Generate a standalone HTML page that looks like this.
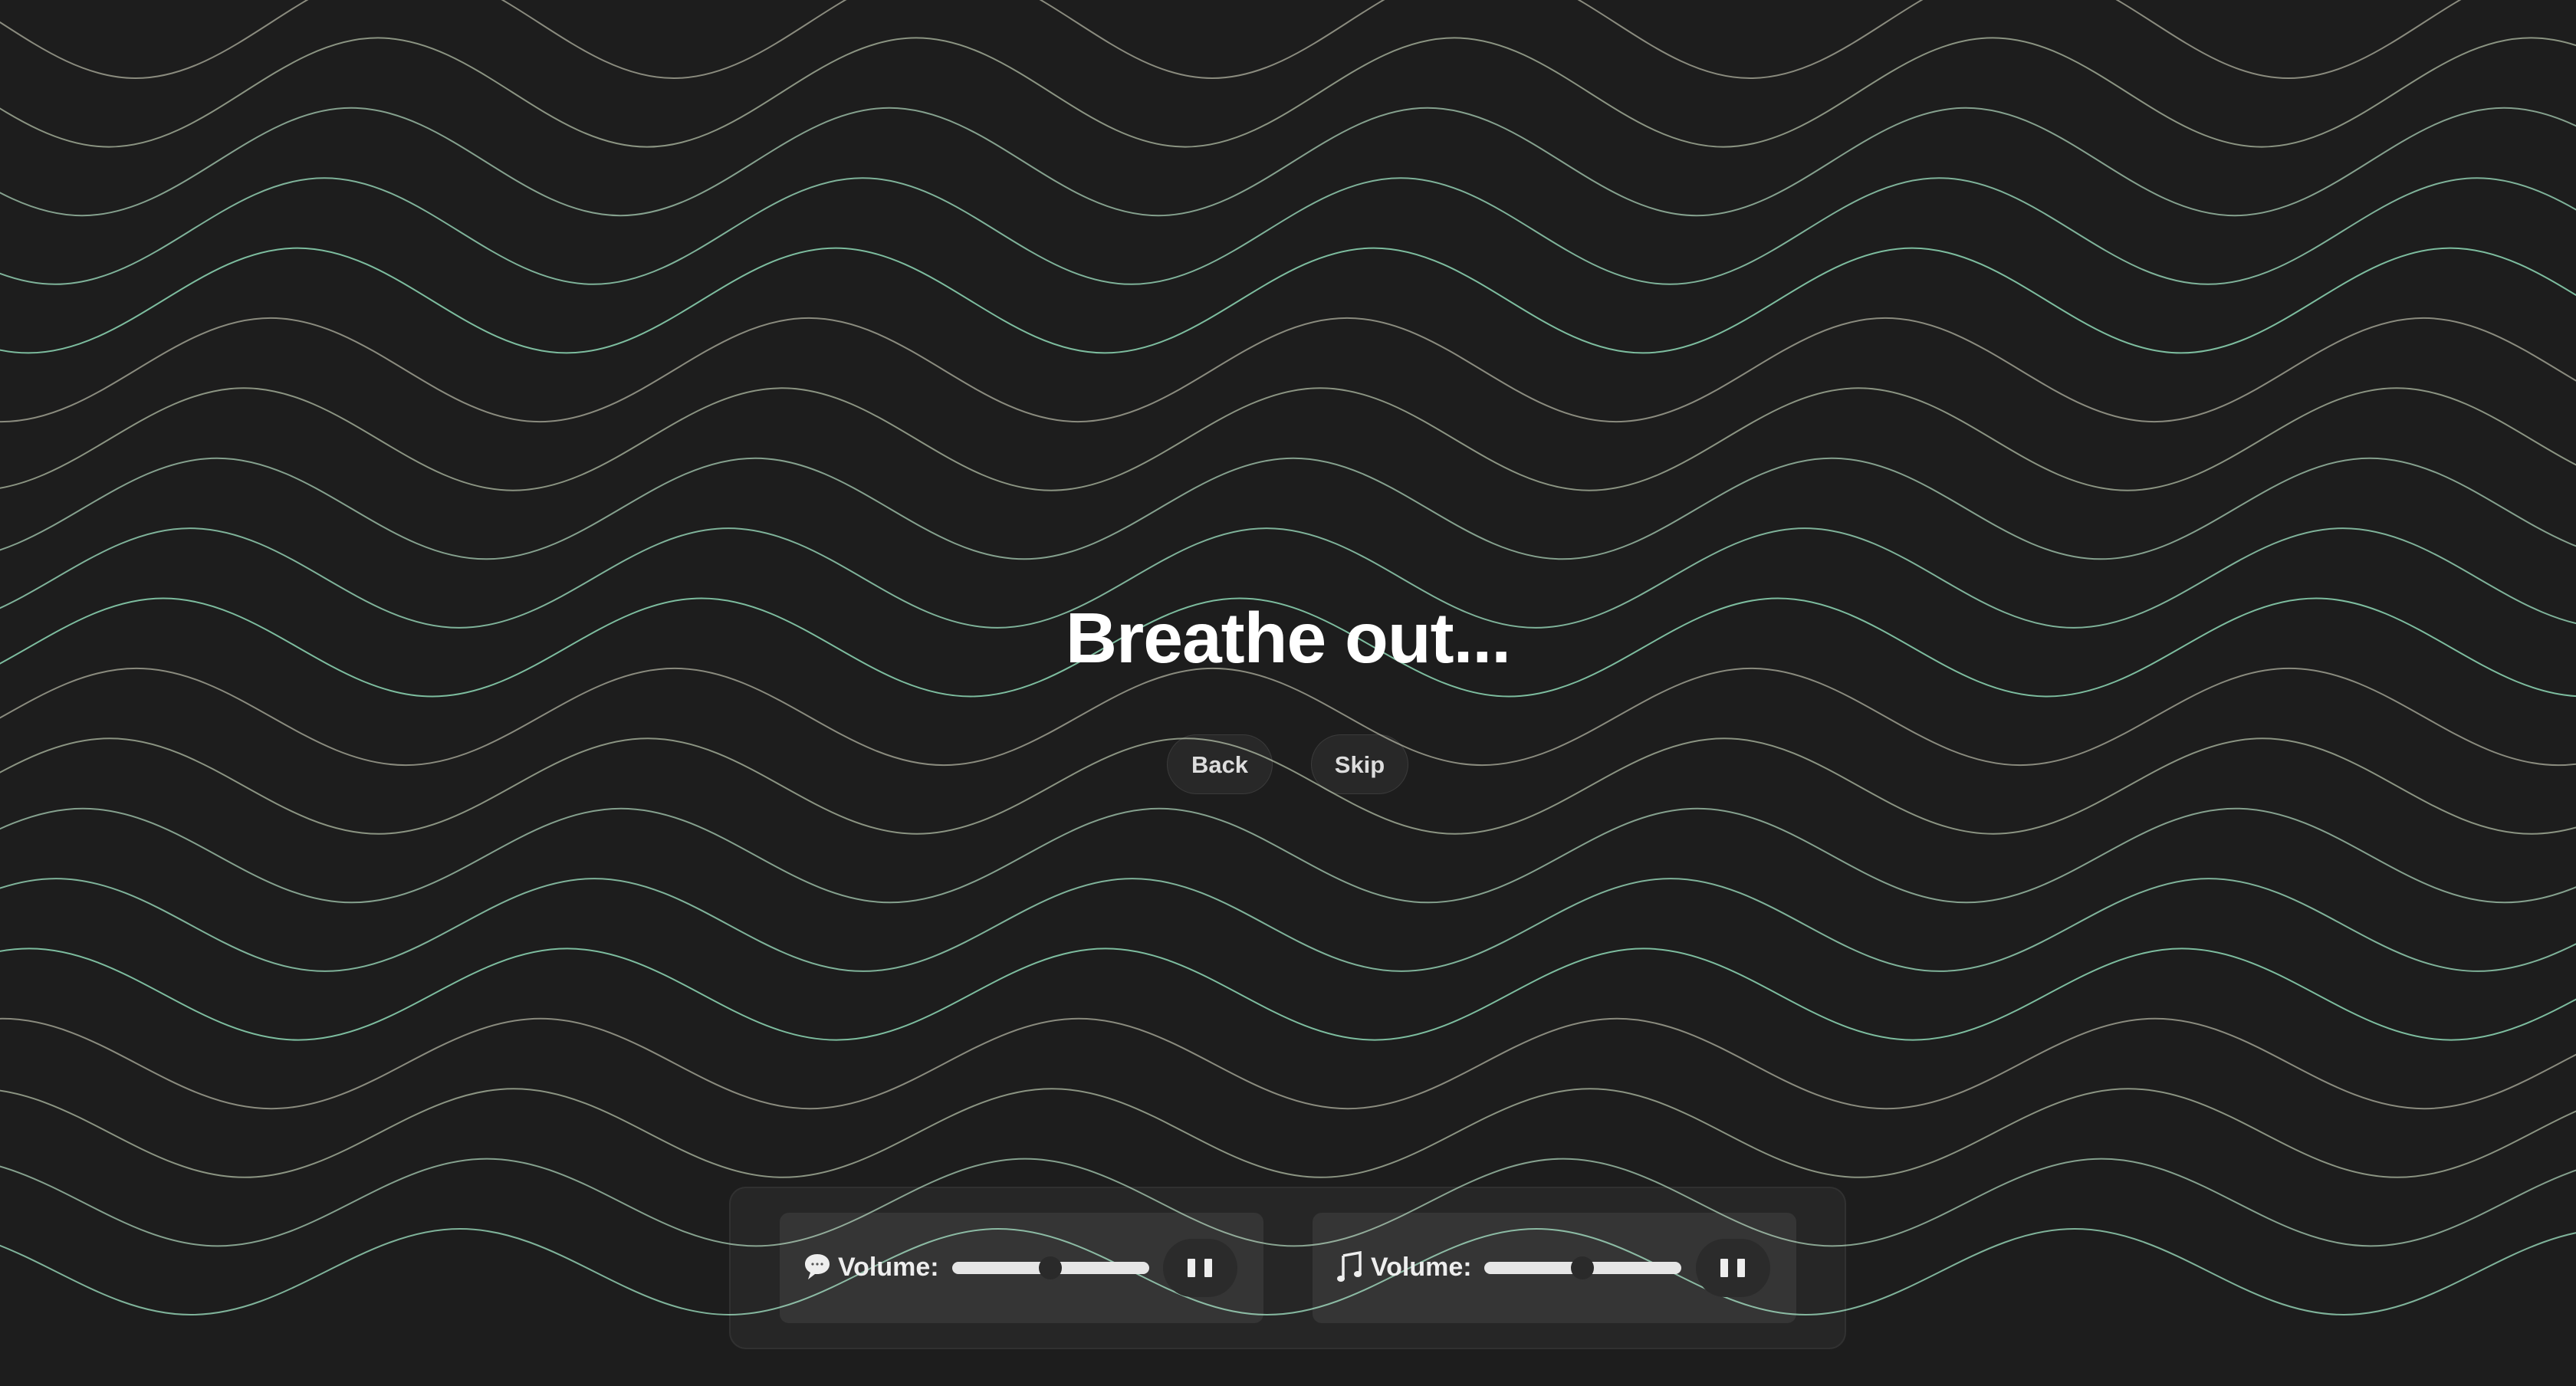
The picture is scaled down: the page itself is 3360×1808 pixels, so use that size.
<!DOCTYPE html>
<html><head><meta charset="utf-8"><style>
html,body{margin:0;padding:0;width:3360px;height:1808px;overflow:hidden;background:#1d1d1d;font-family:"Liberation Sans",sans-serif;}
svg.bg{position:absolute;left:0;top:0}
.title{position:absolute;left:0;width:3360px;top:777px;text-align:center;color:#fff;font-weight:bold;font-size:93px;line-height:110px;letter-spacing:-1px}
.btn{position:absolute;top:958px;height:78px;border-radius:40px;background:rgba(255,255,255,0.05);border:1px solid rgba(255,255,255,0.09);color:#ddd;font-weight:bold;font-size:31px;line-height:78px;text-align:center;box-sizing:border-box}
.panel{position:absolute;left:951px;top:1548px;width:1457px;height:212px;border-radius:22px;background:rgba(255,255,255,0.045);border:2px solid rgba(255,255,255,0.05);box-sizing:border-box}
.card{position:absolute;top:1582px;width:631px;height:144px;border-radius:12px;background:rgba(255,255,255,0.07)}
.vol{position:absolute;top:1632px;color:#eee;font-weight:bold;font-size:34px;line-height:42px}
.track{position:absolute;top:1646px;width:257px;height:16px;border-radius:8px;background:#e6e6e6}
.thumb{position:absolute;top:1639px;width:30px;height:30px;border-radius:50%;background:#2a2a2a}
.pause{position:absolute;top:1616px;width:97px;height:76px;border-radius:38px;background:#2b2b2b}
.pause:before,.pause:after{content:"";position:absolute;top:26px;width:10px;height:24px;background:#eee;border-radius:1px}
.pause:before{left:32px}.pause:after{left:54px}
</style></head><body>
<svg class="bg" width="3360" height="1808" viewBox="0 0 3360 1808">
<defs><path id="w" fill="none" stroke-width="2" vector-effect="non-scaling-stroke" d="M0,-1 c127.8,0 223.2,2 351,2 s223.2,-2 351,-2 s223.2,2 351,2 s223.2,-2 351,-2 s223.2,2 351,2 s223.2,-2 351,-2 s223.2,2 351,2 s223.2,-2 351,-2 s223.2,2 351,2 s223.2,-2 351,-2 s223.2,2 351,2 s223.2,-2 351,-2 s223.2,2 351,2 s223.2,-2 351,-2"/></defs>
<use href="#w" stroke="#8a8b7e" transform="translate(-876,30) scale(1,72)"/>
<use href="#w" stroke="#8b9482" transform="translate(-911,120.5) scale(1,71.1)"/>
<use href="#w" stroke="#85a18e" transform="translate(-946,211) scale(1,70.2)"/>
<use href="#w" stroke="#7fb39a" transform="translate(-981,301.5) scale(1,69.3)"/>
<use href="#w" stroke="#7dbd9f" transform="translate(-1016,392) scale(1,68.4)"/>
<use href="#w" stroke="#8a8b7e" transform="translate(-1051,482.5) scale(1,67.6)"/>
<use href="#w" stroke="#8b9482" transform="translate(-1086,573) scale(1,66.7)"/>
<use href="#w" stroke="#85a18e" transform="translate(-1121,663.5) scale(1,65.8)"/>
<use href="#w" stroke="#7fb39a" transform="translate(-1156,754) scale(1,64.9)"/>
<use href="#w" stroke="#7dbd9f" transform="translate(-1191,844.5) scale(1,64)"/>
<use href="#w" stroke="#8a8b7e" transform="translate(-1226,935) scale(1,63.1)"/>
<use href="#w" stroke="#8b9482" transform="translate(-1261,1025.5) scale(1,62.2)"/>
<use href="#w" stroke="#85a18e" transform="translate(-1296,1116) scale(1,61.3)"/>
<use href="#w" stroke="#7fb39a" transform="translate(-1331,1206.5) scale(1,60.4)"/>
<use href="#w" stroke="#7dbd9f" transform="translate(-1366,1297) scale(1,59.6)"/>
<use href="#w" stroke="#8a8b7e" transform="translate(-1401,1387.5) scale(1,58.7)"/>
<use href="#w" stroke="#8b9482" transform="translate(-734,1478) scale(1,57.8)"/>
<use href="#w" stroke="#85a18e" transform="translate(-769,1568.5) scale(1,56.9)"/>
<use href="#w" stroke="#7fb39a" transform="translate(-804,1659) scale(1,56)"/>
</svg>
<div class="title">Breathe out...</div>
<div class="btn" style="left:1522px;width:138px">Back</div>
<div class="btn" style="left:1710px;width:127px">Skip</div>
<div class="panel"></div>
<div class="card" style="left:1017px"></div>
<div class="card" style="left:1712px"></div>
<svg style="position:absolute;left:1048px;top:1634px" width="36" height="38" viewBox="0 0 36 38"><path d="M18 2C8 2 2 8 2 15c0 5 3 9 7 11l-3 9 9-7c1 0 2 0 3 0 10 0 16-6 16-13S28 2 18 2z" fill="#eee"/><circle cx="12" cy="15" r="1.6" fill="#555"/><circle cx="18" cy="15" r="1.6" fill="#555"/><circle cx="24" cy="15" r="1.6" fill="#555"/></svg>
<div class="vol" style="left:1093px">Volume:</div>
<div class="track" style="left:1242px"></div>
<div class="thumb" style="left:1355px"></div>
<div class="pause" style="left:1517px"></div>
<svg style="position:absolute;left:1744px;top:1632px" width="32" height="42" viewBox="0 0 32 42"><path d="M8 6 L30 2 L30 30" fill="none" stroke="#eee" stroke-width="3.5"/><path d="M8 6 L8 36" stroke="#eee" stroke-width="3.5"/><ellipse cx="5" cy="36" rx="5" ry="4" fill="#eee"/><ellipse cx="27" cy="30" rx="5" ry="4" fill="#eee"/></svg>
<div class="vol" style="left:1788px">Volume:</div>
<div class="track" style="left:1936px"></div>
<div class="thumb" style="left:2049px"></div>
<div class="pause" style="left:2212px"></div>
</body></html>
